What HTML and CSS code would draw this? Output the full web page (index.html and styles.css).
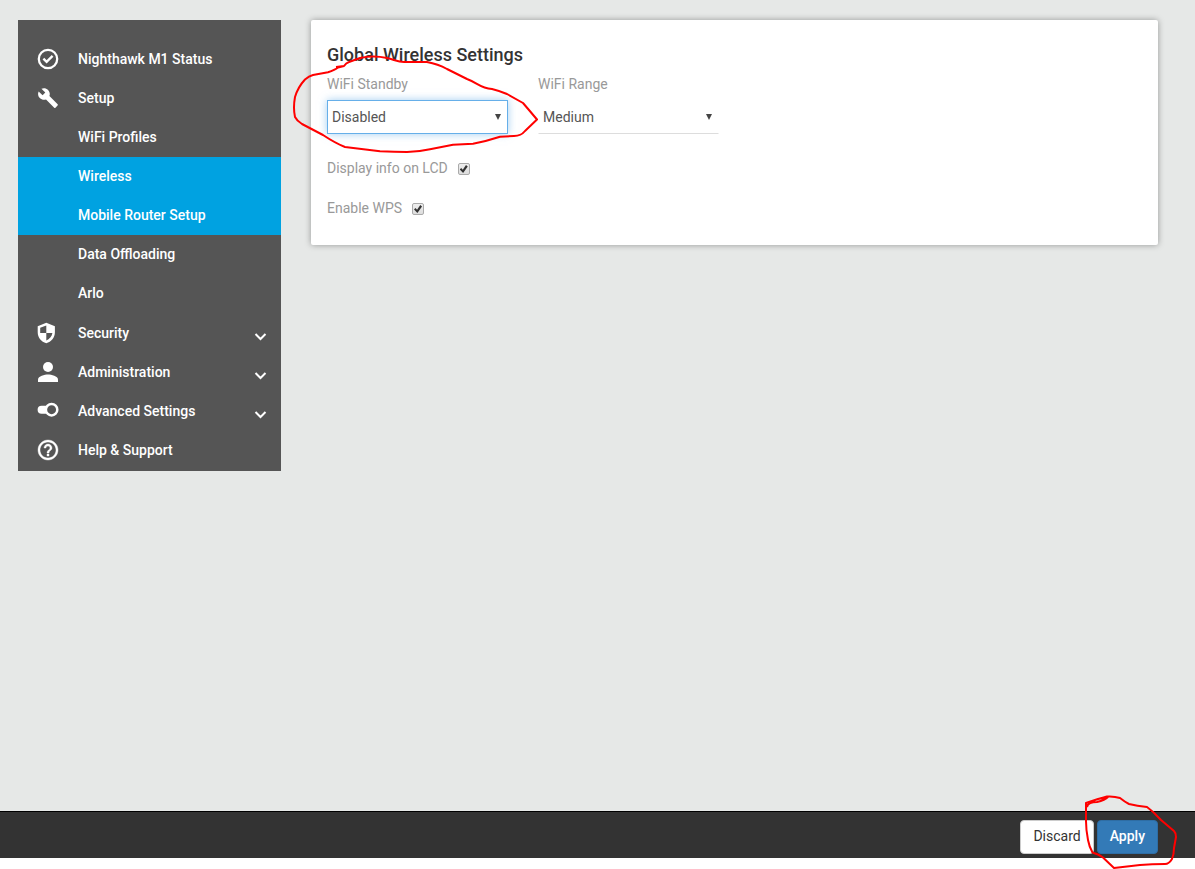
FILE: index.html
```html
<!DOCTYPE html>
<html lang="en">
<head>
<meta charset="utf-8">
<meta name="viewport" content="width=device-width, initial-scale=1">
<title>Global Wireless Settings</title>
<link rel="stylesheet" href="styles.css">
</head>
<body>
<div class="page">
  <nav class="sidebar" aria-label="Main">
    <ul class="menu">
      <li><a class="item" href="#status"><svg class="icon" viewBox="0 0 24 24"><circle cx="12" cy="12" r="9.2" fill="none" stroke="currentColor" stroke-width="2.3"/><path d="M7.400 11.700l3.200 3.200 6-6" fill="none" stroke="currentColor" stroke-width="2.400"/></svg><span>Nighthawk M1 Status</span></a></li>
      <li><a class="item" href="#setup"><svg class="icon" viewBox="0 0 24 24"><path d="M22.7 19l-9.1-9.1c.9-2.3.4-5-1.5-6.9-2-2-5-2.4-7.4-1.3L9 6 6 9 1.6 4.7C.4 7.1.9 10.1 2.9 12.1c1.9 1.9 4.6 2.4 6.9 1.5l9.1 9.1c.4.4 1 .4 1.4 0l2.3-2.3c.5-.4.5-1.1.1-1.4z" transform="translate(1.2 1.2) scale(.9)"/></svg><span>Setup</span></a>
        <ul class="menu submenu">
          <li><a class="item" href="#profiles">WiFi Profiles</a></li>
          <li><a class="item active" href="#wireless">Wireless</a></li>
          <li><a class="item active" href="#router">Mobile Router Setup</a></li>
          <li><a class="item" href="#offloading">Data Offloading</a></li>
          <li><a class="item" href="#arlo">Arlo</a></li>
        </ul>
      </li>
      <li><a class="item" href="#security"><svg class="icon" viewBox="0 0 24 24"><path fill-rule="evenodd" d="M10.300 1.800L1.700 5.300v6c0 5.200 3.600 9.700 8.600 11 5-1.300 8.600-5.800 8.600-11v-6zM10.300 4.400v7.500H16.400c-.5 3.400-3 6.400-6.100 7.500v-7.500H4.200V6.800z"/></svg><span>Security</span><svg class="chevron" viewBox="0 0 12 8"><path d="M1 1l5 5 5-5"/></svg></a></li>
      <li><a class="item" href="#administration"><svg class="icon" viewBox="0 0 24 24"><circle cx="12" cy="7" r="5"/><path d="M2 22v-2.500c0-3.300 6.700-5 10-5s10 1.700 10 5V22z"/></svg><span>Administration</span><svg class="chevron" viewBox="0 0 12 8"><path d="M1 1l5 5 5-5"/></svg></a></li>
      <li><a class="item" href="#advanced"><svg class="icon" viewBox="0 0 24 24"><path d="M5.600 6.700h5.400a7 7 0 0 0 0 8H5.600a4 4 0 0 1 0-8z"/><circle cx="15.600" cy="10.700" r="5.700" fill="none" stroke="currentColor" stroke-width="2.500"/></svg><span>Advanced Settings</span><svg class="chevron" viewBox="0 0 12 8"><path d="M1 1l5 5 5-5"/></svg></a></li>
      <li><a class="item" href="#help"><svg class="icon" viewBox="0 0 24 24"><path stroke="currentColor" stroke-width=".4" d="M11 18h2v-2h-2v2zm1-16C6.480 2 2 6.480 2 12s4.480 10 10 10 10-4.480 10-10S17.520 2 12 2zm0 18c-4.410 0-8-3.590-8-8s3.590-8 8-8 8 3.590 8 8-3.590 8-8 8zm0-14c-2.210 0-4 1.790-4 4h2c0-1.100.9-2 2-2s2 .9 2 2c0 2-3 1.750-3 5h2c0-2.250 3-2.500 3-5 0-2.210-1.790-4-4-4z"/></svg><span>Help &amp; Support</span></a></li>
    </ul>
  </nav>

  <main class="card">
    <h1 class="title">Global Wireless Settings</h1>
    <div class="fields">
      <div class="field">
        <label for="standby">WiFi Standby</label>
        <div class="select-box">
          <select id="standby" class="select focused"><option>Disabled</option></select>
          <svg class="arrow" viewBox="0 0 6 6"><path d="M0 0h6L3 6z"/></svg>
        </div>
      </div>
      <div class="field">
        <label for="range">WiFi Range</label>
        <div class="select-box">
          <select id="range" class="select"><option>Medium</option></select>
          <svg class="arrow" viewBox="0 0 6 6"><path d="M0 0h6L3 6z"/></svg>
        </div>
      </div>
    </div>
    <div class="check"><label for="lcd">Display info on LCD</label><input type="checkbox" id="lcd" checked></div>
    <div class="check"><label for="wps">Enable WPS</label><input type="checkbox" id="wps" checked></div>
    <svg class="marker marker-standby" viewBox="290 50 250 106" aria-hidden="true"><path d="M336 67L344 66Q346 63 349 62L360 58Q373 55 387 58C395 60 398 62 404 62L427 62Q438 64 447 69L467 79C478 83 480 88 492 89Q500 91 507 94L523 103Q529 110 537 119.500L525 131Q521 136 514 136L500 136.700Q487 141 473 143.700L453 144.700L430 149.300Q418 152 407 152Q395 152 380 151.300L345 147Q335 143 323 135L302 124Q297 121 295 117Q293 108 295 97Q298 87 305 79.500Q309 76 313 75L328 72.300Q335 70 338 67.500L344 66"/></svg>
  </main>
</div>

<footer class="actions">
  <button type="button" class="button">Discard</button>
  <button type="button" class="button primary">Apply</button>
  <svg class="marker marker-apply" viewBox="1080 790 100 80" aria-hidden="true"><path d="M1087 807Q1088 802 1097 802Q1105 800 1108 797M1087 806L1086 803L1098 799Q1103 798 1107 796.500Q1114 796 1120 798Q1125 802 1129 804Q1137 806 1147 807Q1154 812 1161 820L1174 831Q1176 833 1176 837L1174 848Q1174 854 1172 859Q1169 864 1165 864Q1152 864 1140 865L1114 868L1103 857.500Q1098 854 1092.500 852.500Q1089 846 1088 840Q1086 830 1086 821V803"/></svg>
</footer>
</body>
</html>
```
FILE: styles.css
```css
* {
  box-sizing: border-box;
}

body {
  display: flex;
  flex-direction: column;
  min-height: 100vh;
  margin: 0;
  padding-bottom: 11px;
  background: #fff;
  color: #333;
  font: 14px/20px Roboto, sans-serif;
}

.page {
  display: flex;
  flex: 1;
  align-items: flex-start;
  gap: 30px;
  padding: 20px 37px 20px 18px;
  background: #e6e8e7;
}

.sidebar {
  flex: 0 0 263px;
  padding: 20px 0 1px;
  background: #555;
}

.menu {
  margin: 0;
  padding: 0;
  list-style: none;
}

.submenu {
  padding-bottom: 1px;
}

.item {
  display: flex;
  align-items: center;
  gap: 18px;
  height: 39px;
  padding: 0 14px 2px 18px;
  color: #fff;
  font-weight: 500;
  text-decoration: none;
}

.submenu .item {
  padding-left: 60px;
}

.item.active {
  background: #00a2e1;
}

.icon {
  width: 24px;
  height: 24px;
  fill: currentColor;
}

.chevron {
  width: 13px;
  height: 8px;
  margin: 8px 0 0 auto;
  fill: none;
  stroke: currentColor;
  stroke-width: 2;
}

.card {
  position: relative;
  flex: 1;
  padding: 25px 16px 27px;
  border-radius: 2px;
  background: #fff;
  box-shadow: 0 0 6px rgba(0, 0, 0, 0.35);
}

.title {
  margin: 0 0 9px;
  font-size: 18px;
  font-weight: 500;
  line-height: 20px;
}

.fields {
  display: flex;
  gap: 30px;
  margin-bottom: 24px;
}

.field {
  width: 181px;
}

label {
  color: #999;
}

.field label {
  display: block;
  margin-bottom: 6px;
}

.select-box {
  position: relative;
}

.select {
  display: block;
  width: 100%;
  height: 34px;
  padding: 0 4px;
  appearance: none;
  border: 1px solid transparent;
  border-bottom-color: #ddd;
  border-radius: 0;
  outline: none;
  background: #fff;
  color: #555;
  font: inherit;
}

.select.focused {
  border-color: #66afe9;
  box-shadow: 0 0 8px rgba(102, 175, 233, 0.6);
}

.arrow {
  position: absolute;
  top: 14px;
  right: 7px;
  width: 6px;
  height: 6px;
  fill: #444;
  pointer-events: none;
}

.check {
  display: flex;
  align-items: center;
  gap: 10px;
}

.check + .check {
  margin-top: 20px;
}

.check input {
  display: grid;
  place-items: center;
  width: 12px;
  height: 12px;
  margin: 2px 0 0;
  appearance: none;
  border: 1px solid #aaa;
  border-radius: 2px;
  background: linear-gradient(#eee, #ddd);
}

.check input:checked::before {
  width: 8px;
  height: 8px;
  background: #333;
  clip-path: polygon(0 55%, 18% 38%, 38% 58%, 78% 0, 100% 18%, 42% 100%);
  content: "";
}

.actions {
  position: relative;
  display: flex;
  justify-content: flex-end;
  gap: 3px;
  padding: 8px 37px 4px;
  border-top: 1px solid #000;
  background: #333;
}

.button {
  height: 34px;
  padding: 0 12px 2px;
  border: 1px solid #ccc;
  border-radius: 4px;
  background: #fff;
  color: #333;
  font: inherit;
}

.button.primary {
  border-color: #2e6da4;
  background: #337ab7;
  color: #fff;
  font-weight: 500;
}

.marker {
  position: absolute;
  fill: none;
  stroke: #f00;
  stroke-width: 2;
  stroke-linejoin: round;
  pointer-events: none;
}

.marker-standby {
  top: 30px;
  left: -21px;
  width: 250px;
  height: 106px;
}

.marker-apply {
  top: -22px;
  right: 15px;
  width: 100px;
  height: 80px;
}
```
